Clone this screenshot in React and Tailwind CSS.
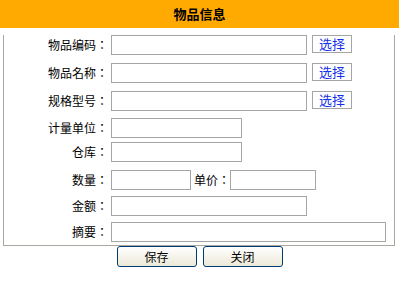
import React from 'react'

const font = { fontFamily: '"Noto Sans CJK TC", "Noto Sans CJK SC", "Liberation Sans", sans-serif' }

function Field({ w }) {
  return <input type="text" className={`h-[20px] border border-[#a5a5a5] bg-white outline-none ${w}`} />
}

function Label({ children }) {
  return <span className="w-[107px] shrink-0 pr-[3px] text-right text-[12px] leading-none text-black">{children}</span>
}

function PickBtn() {
  return (
    <button className="ml-[5px] h-[18px] w-[40px] border border-[#a5a5a5] bg-white text-[13px] leading-none text-[#1530e8] -mt-[3px]">
      选择
    </button>
  )
}

export default function App() {
  return (
    <div className="h-[297px] w-[403px] bg-white" style={font}>
      <div className="flex h-[28px] w-[399px] items-center justify-center bg-[#ffaa00] text-[13px] font-bold text-black">
        物品信息
      </div>

      <div className="ml-[3px] w-[392px] border border-t-0 border-[#a8a8a0] pb-[3px]">
        <div className="mt-[7px] flex items-center">
          <Label>物品编码：</Label>
          <Field w="w-[196px]" />
          <PickBtn />
        </div>
        <div className="mt-[8px] flex items-center">
          <Label>物品名称：</Label>
          <Field w="w-[196px]" />
          <PickBtn />
        </div>
        <div className="mt-[8px] flex items-center">
          <Label>规格型号：</Label>
          <Field w="w-[196px]" />
          <PickBtn />
        </div>
        <div className="mt-[7px] flex items-center">
          <Label>计量单位：</Label>
          <Field w="w-[131px]" />
        </div>
        <div className="mt-[4px] flex items-center">
          <Label>仓库：</Label>
          <Field w="w-[131px]" />
        </div>
        <div className="mt-[8px] flex items-center">
          <Label>数量：</Label>
          <Field w="w-[80px]" />
          <span className="ml-[3px] w-[36px] text-[12px] leading-none text-black">单价：</span>
          <Field w="w-[86px]" />
        </div>
        <div className="mt-[6px] flex items-center">
          <Label>金额：</Label>
          <Field w="w-[196px]" />
        </div>
        <div className="mt-[6px] flex items-center">
          <Label>摘要：</Label>
          <Field w="w-[275px]" />
        </div>
      </div>

      <div className="flex w-[399px] justify-center gap-[6px]">
        <button className="h-[21px] w-[80px] rounded-[3px] border border-[#003c74] bg-gradient-to-b from-white to-[#ece9d8] text-[12px] leading-none text-black">
          保存
        </button>
        <button className="h-[21px] w-[80px] rounded-[3px] border border-[#003c74] bg-gradient-to-b from-white to-[#ece9d8] text-[12px] leading-none text-black">
          关闭
        </button>
      </div>
    </div>
  )
}
